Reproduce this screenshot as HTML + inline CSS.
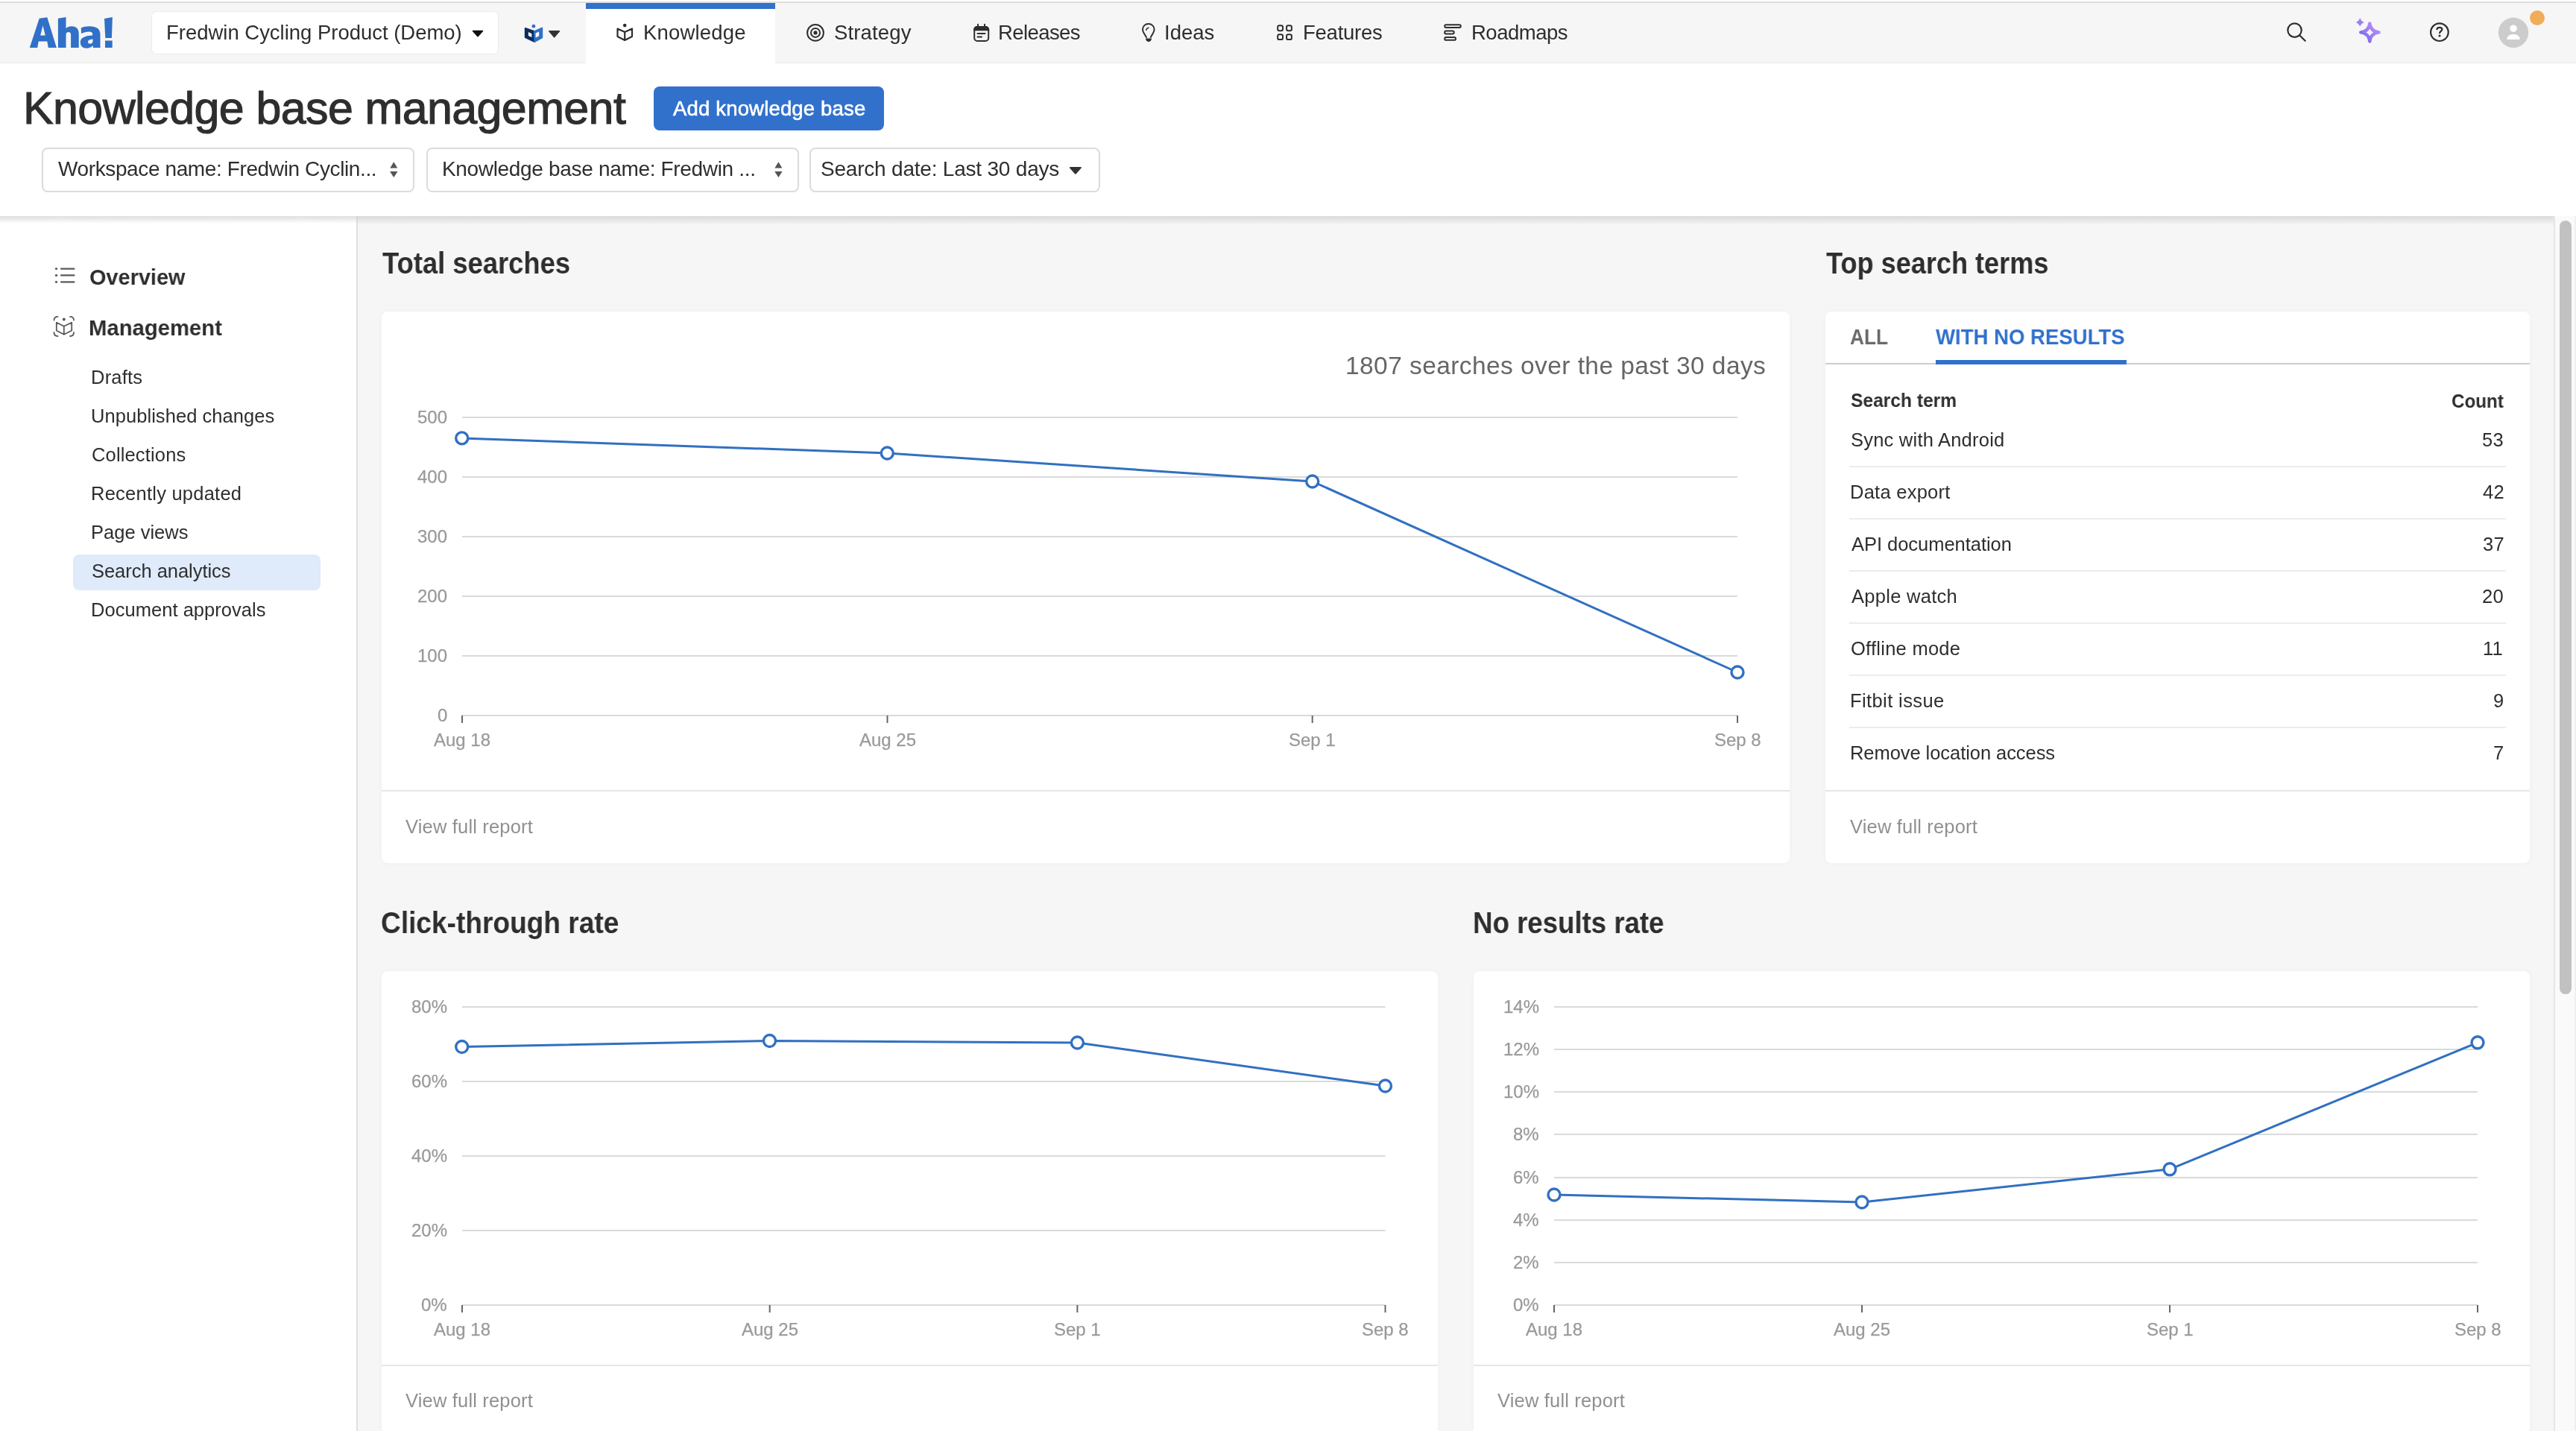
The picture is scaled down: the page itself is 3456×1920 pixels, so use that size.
<!DOCTYPE html>
<html><head><meta charset="utf-8"><title>Knowledge base management</title>
<style>
html,body{margin:0;padding:0;width:3456px;height:1920px;overflow:hidden;background:#f6f6f6;}
body{position:relative;font-family:"Liberation Sans", sans-serif;}
.t{position:absolute;white-space:nowrap;font-family:"Liberation Sans", sans-serif;will-change:transform;}
svg{position:absolute;left:0;top:0;}
</style></head><body>
<div style="position:absolute;left:0px;top:0px;width:3456px;height:1920px;background:#f6f6f6"></div>
<div style="position:absolute;left:0px;top:0px;width:3456px;height:2px;background:#ffffff"></div>
<div style="position:absolute;left:0px;top:2px;width:3456px;height:2px;background:#dedede"></div>
<div style="position:absolute;left:0px;top:4px;width:3456px;height:82px;background:#f6f6f6"></div>
<div style="position:absolute;left:0px;top:84px;width:3456px;height:2px;background:#ececec"></div>
<div style="position:absolute;left:0px;top:85px;width:3456px;height:205px;background:#ffffff"></div>
<div style="position:absolute;left:0px;top:290px;width:3456px;height:12px;background:linear-gradient(#dadada,rgba(246,246,246,0))"></div>
<div style="position:absolute;left:0px;top:290px;width:478px;height:1630px;background:#ffffff"></div>
<div style="position:absolute;left:0px;top:290px;width:478px;height:10px;background:linear-gradient(#dedede,rgba(255,255,255,0))"></div>
<div style="position:absolute;left:478px;top:290px;width:2px;height:1630px;background:linear-gradient(#d4d4d4,#e0e0e0 12px,#e0e0e0)"></div>
<div style="position:absolute;left:786px;top:4px;width:254px;height:82px;background:#ffffff"></div>
<div style="position:absolute;left:786px;top:4px;width:254px;height:8px;background:#3171cc"></div>
<div style="position:absolute;left:204px;top:16px;width:464px;height:56px;background:#ffffff;border-radius:6px;box-shadow:0 0 0 1px #ececec"></div>
<div style="position:absolute;left:877px;top:116px;width:309px;height:59px;background:#3171cc;border-radius:8px"></div>
<div style="position:absolute;left:56px;top:198px;width:500px;height:60px;background:#fff;border:2px solid #dcdcdc;border-radius:8px;box-sizing:border-box"></div>
<div style="position:absolute;left:572px;top:198px;width:500px;height:60px;background:#fff;border:2px solid #dcdcdc;border-radius:8px;box-sizing:border-box"></div>
<div style="position:absolute;left:1086px;top:198px;width:390px;height:60px;background:#fff;border:2px solid #dcdcdc;border-radius:8px;box-sizing:border-box"></div>
<div style="position:absolute;left:98px;top:744px;width:332px;height:48px;background:#dfeafa;border-radius:8px"></div>
<div style="position:absolute;left:512px;top:418px;width:1889px;height:740px;background:#fff;border-radius:8px;box-shadow:0 0 6px rgba(0,0,0,0.035)"></div>
<div style="position:absolute;left:2449px;top:418px;width:945px;height:740px;background:#fff;border-radius:8px;box-shadow:0 0 6px rgba(0,0,0,0.035)"></div>
<div style="position:absolute;left:512px;top:1303px;width:1417px;height:687px;background:#fff;border-radius:8px;box-shadow:0 0 6px rgba(0,0,0,0.035)"></div>
<div style="position:absolute;left:1977px;top:1303px;width:1417px;height:687px;background:#fff;border-radius:8px;box-shadow:0 0 6px rgba(0,0,0,0.035)"></div>
<div style="position:absolute;left:512px;top:1060px;width:1889px;height:2px;background:#e6e6e6"></div>
<div style="position:absolute;left:2449px;top:1060px;width:945px;height:2px;background:#e6e6e6"></div>
<div style="position:absolute;left:512px;top:1831px;width:1417px;height:2px;background:#e6e6e6"></div>
<div style="position:absolute;left:1977px;top:1831px;width:1417px;height:2px;background:#e6e6e6"></div>
<div style="position:absolute;left:2449px;top:487px;width:945px;height:2px;background:#cdcdcd"></div>
<div style="position:absolute;left:2597px;top:483px;width:256px;height:6px;background:#3171cc"></div>
<div style="position:absolute;left:2481px;top:625px;width:881px;height:2px;background:#ececec"></div>
<div style="position:absolute;left:2481px;top:695px;width:881px;height:2px;background:#ececec"></div>
<div style="position:absolute;left:2481px;top:765px;width:881px;height:2px;background:#ececec"></div>
<div style="position:absolute;left:2481px;top:835px;width:881px;height:2px;background:#ececec"></div>
<div style="position:absolute;left:2481px;top:905px;width:881px;height:2px;background:#ececec"></div>
<div style="position:absolute;left:2481px;top:975px;width:881px;height:2px;background:#ececec"></div>
<div style="position:absolute;left:3426px;top:290px;width:30px;height:1630px;background:#fafafa"></div>
<div style="position:absolute;left:3426px;top:290px;width:2px;height:1630px;background:#e6e6e6"></div>
<div style="position:absolute;left:3454px;top:290px;width:2px;height:1630px;background:#f0f0f0"></div>
<div style="position:absolute;left:3434px;top:296px;width:16px;height:1038px;background:#c1c1c1;border-radius:8px"></div>
<div class="t" style="left:223.44px;top:29.52px;font-size:27.5px;line-height:27.5px;letter-spacing:-0.020px;color:#2e2e2e;">Fredwin Cycling Product (Demo)</div>
<div class="t" style="left:862.74px;top:29.52px;font-size:27.5px;line-height:27.5px;letter-spacing:0.175px;color:#2e2e2e;">Knowledge</div>
<div class="t" style="left:1119.35px;top:29.62px;font-size:27.5px;line-height:27.5px;letter-spacing:0.156px;color:#2e2e2e;">Strategy</div>
<div class="t" style="left:1339.44px;top:29.62px;font-size:27.5px;line-height:27.5px;letter-spacing:-0.585px;color:#2e2e2e;">Releases</div>
<div class="t" style="left:1562.06px;top:29.62px;font-size:27.5px;line-height:27.5px;letter-spacing:0.015px;color:#2e2e2e;">Ideas</div>
<div class="t" style="left:1748.24px;top:29.62px;font-size:27.5px;line-height:27.5px;letter-spacing:-0.253px;color:#2e2e2e;">Features</div>
<div class="t" style="left:1973.74px;top:29.62px;font-size:27.5px;line-height:27.5px;letter-spacing:-0.491px;color:#2e2e2e;">Roadmaps</div>
<div class="t" style="left:31.00px;top:114.86px;font-size:61px;line-height:61px;letter-spacing:-0.634px;color:#2e2e2e;-webkit-text-stroke:1.1px #2e2e2e;">Knowledge base management</div>
<div class="t" style="left:902.95px;top:131.72px;font-size:27.5px;line-height:27.5px;letter-spacing:0.173px;color:#ffffff;-webkit-text-stroke:0.6px #ffffff;">Add knowledge base</div>
<div class="t" style="left:77.88px;top:213.10px;font-size:28px;line-height:28px;letter-spacing:-0.384px;color:#2e2e2e;">Workspace name: Fredwin Cyclin...</div>
<div class="t" style="left:593.30px;top:213.10px;font-size:28px;line-height:28px;letter-spacing:-0.328px;color:#2e2e2e;">Knowledge base name: Fredwin ...</div>
<div class="t" style="left:1101.03px;top:213.10px;font-size:28px;line-height:28px;letter-spacing:-0.210px;color:#2e2e2e;">Search date: Last 30 days</div>
<div class="t" style="left:119.52px;top:356.61px;font-size:30px;line-height:30px;letter-spacing:0.000px;color:#2e2e2e;font-weight:700;transform:scaleX(0.9626);transform-origin:0 0;">Overview</div>
<div class="t" style="left:119.04px;top:424.61px;font-size:30px;line-height:30px;letter-spacing:0.000px;color:#2e2e2e;font-weight:700;transform:scaleX(0.9752);transform-origin:0 0;">Management</div>
<div class="t" style="left:121.91px;top:494.11px;font-size:25.5px;line-height:25.5px;letter-spacing:0.221px;color:#2e2e2e;">Drafts</div>
<div class="t" style="left:122.03px;top:546.11px;font-size:25.5px;line-height:25.5px;letter-spacing:0.057px;color:#2e2e2e;">Unpublished changes</div>
<div class="t" style="left:122.71px;top:598.11px;font-size:25.5px;line-height:25.5px;letter-spacing:0.149px;color:#2e2e2e;">Collections</div>
<div class="t" style="left:121.91px;top:650.11px;font-size:25.5px;line-height:25.5px;letter-spacing:0.238px;color:#2e2e2e;">Recently updated</div>
<div class="t" style="left:121.91px;top:702.11px;font-size:25.5px;line-height:25.5px;letter-spacing:0.001px;color:#2e2e2e;">Page views</div>
<div class="t" style="left:122.84px;top:754.11px;font-size:25.5px;line-height:25.5px;letter-spacing:-0.034px;color:#2e2e2e;">Search analytics</div>
<div class="t" style="left:121.91px;top:806.11px;font-size:25.5px;line-height:25.5px;letter-spacing:0.038px;color:#2e2e2e;">Document approvals</div>
<div class="t" style="left:512.59px;top:332.74px;font-size:40px;line-height:40px;letter-spacing:0.000px;color:#2e2e2e;font-weight:700;transform:scaleX(0.9092);transform-origin:0 0;">Total searches</div>
<div class="t" style="left:2450.34px;top:332.74px;font-size:40px;line-height:40px;letter-spacing:0.000px;color:#2e2e2e;font-weight:700;transform:scaleX(0.9029);transform-origin:0 0;">Top search terms</div>
<div class="t" style="left:511.48px;top:1217.84px;font-size:40px;line-height:40px;letter-spacing:0.000px;color:#2e2e2e;font-weight:700;transform:scaleX(0.9269);transform-origin:0 0;">Click-through rate</div>
<div class="t" style="left:1975.55px;top:1217.84px;font-size:40px;line-height:40px;letter-spacing:0.000px;color:#2e2e2e;font-weight:700;transform:scaleX(0.9158);transform-origin:0 0;">No results rate</div>
<div class="t" style="left:1805.35px;top:474.44px;font-size:33.5px;line-height:33.5px;letter-spacing:0.426px;color:#666666;">1807 searches over the past 30 days</div>
<div class="t" style="left:544.19px;top:1097.21px;font-size:25.5px;line-height:25.5px;letter-spacing:0.177px;color:#909090;">View full report</div>
<div class="t" style="left:2481.89px;top:1097.21px;font-size:25.5px;line-height:25.5px;letter-spacing:0.177px;color:#909090;">View full report</div>
<div class="t" style="left:544.19px;top:1866.91px;font-size:25.5px;line-height:25.5px;letter-spacing:0.177px;color:#909090;">View full report</div>
<div class="t" style="left:2008.89px;top:1866.91px;font-size:25.5px;line-height:25.5px;letter-spacing:0.177px;color:#909090;">View full report</div>
<div class="t" style="left:2481.85px;top:436.61px;font-size:30px;line-height:30px;letter-spacing:0.000px;color:#6a6a6a;font-weight:700;transform:scaleX(0.8739);transform-origin:0 0;">ALL</div>
<div class="t" style="left:2597.47px;top:436.61px;font-size:30px;line-height:30px;letter-spacing:0.000px;color:#3171cc;font-weight:700;transform:scaleX(0.9184);transform-origin:0 0;">WITH NO RESULTS</div>
<div class="t" style="left:2483.29px;top:525.41px;font-size:25.5px;line-height:25.5px;letter-spacing:0.000px;color:#2e2e2e;font-weight:700;transform:scaleX(0.9635);transform-origin:0 0;">Search term</div>
<div class="t" style="left:3288.51px;top:525.91px;font-size:25.5px;line-height:25.5px;letter-spacing:0.000px;color:#2e2e2e;font-weight:700;transform:scaleX(0.9477);transform-origin:0 0;">Count</div>
<div class="t" style="left:2482.84px;top:577.61px;font-size:25.5px;line-height:25.5px;letter-spacing:0.219px;color:#2e2e2e;">Sync with Android</div>
<div class="t" style="left:3330.46px;top:577.61px;font-size:25.5px;line-height:25.5px;letter-spacing:0.300px;color:#2e2e2e;">53</div>
<div class="t" style="left:2481.91px;top:647.61px;font-size:25.5px;line-height:25.5px;letter-spacing:0.256px;color:#2e2e2e;">Data export</div>
<div class="t" style="left:3330.62px;top:647.61px;font-size:25.5px;line-height:25.5px;letter-spacing:0.300px;color:#2e2e2e;">42</div>
<div class="t" style="left:2483.95px;top:717.61px;font-size:25.5px;line-height:25.5px;letter-spacing:-0.035px;color:#2e2e2e;">API documentation</div>
<div class="t" style="left:3330.62px;top:717.61px;font-size:25.5px;line-height:25.5px;letter-spacing:0.300px;color:#2e2e2e;">37</div>
<div class="t" style="left:2483.95px;top:787.91px;font-size:25.5px;line-height:25.5px;letter-spacing:0.279px;color:#2e2e2e;">Apple watch</div>
<div class="t" style="left:3330.33px;top:787.91px;font-size:25.5px;line-height:25.5px;letter-spacing:0.300px;color:#2e2e2e;">20</div>
<div class="t" style="left:2482.79px;top:857.91px;font-size:25.5px;line-height:25.5px;letter-spacing:0.261px;color:#2e2e2e;">Offline mode</div>
<div class="t" style="left:3330.58px;top:857.91px;font-size:25.5px;line-height:25.5px;letter-spacing:0.300px;color:#2e2e2e;">11</div>
<div class="t" style="left:2481.91px;top:927.91px;font-size:25.5px;line-height:25.5px;letter-spacing:0.396px;color:#2e2e2e;">Fitbit issue</div>
<div class="t" style="left:3345.03px;top:927.91px;font-size:25.5px;line-height:25.5px;letter-spacing:0.300px;color:#2e2e2e;">9</div>
<div class="t" style="left:2481.91px;top:997.91px;font-size:25.5px;line-height:25.5px;letter-spacing:-0.060px;color:#2e2e2e;">Remove location access</div>
<div class="t" style="left:3345.10px;top:997.91px;font-size:25.5px;line-height:25.5px;letter-spacing:0.300px;color:#2e2e2e;">7</div>
<div class="t" style="left:559.89px;top:547.88px;font-size:24px;line-height:24px;letter-spacing:0.000px;color:#999999;-webkit-text-stroke:0.25px #999999;">500</div>
<div class="t" style="left:559.89px;top:627.88px;font-size:24px;line-height:24px;letter-spacing:0.000px;color:#999999;-webkit-text-stroke:0.25px #999999;">400</div>
<div class="t" style="left:559.89px;top:707.88px;font-size:24px;line-height:24px;letter-spacing:0.000px;color:#999999;-webkit-text-stroke:0.25px #999999;">300</div>
<div class="t" style="left:559.89px;top:787.88px;font-size:24px;line-height:24px;letter-spacing:0.000px;color:#999999;-webkit-text-stroke:0.25px #999999;">200</div>
<div class="t" style="left:559.89px;top:867.88px;font-size:24px;line-height:24px;letter-spacing:0.000px;color:#999999;-webkit-text-stroke:0.25px #999999;">100</div>
<div class="t" style="left:586.59px;top:947.88px;font-size:24px;line-height:24px;letter-spacing:0.000px;color:#999999;-webkit-text-stroke:0.25px #999999;">0</div>
<div class="t" style="left:582.46px;top:981.48px;font-size:24px;line-height:24px;letter-spacing:0.000px;color:#999999;-webkit-text-stroke:0.25px #999999;">Aug 18</div>
<div class="t" style="left:1152.95px;top:981.48px;font-size:24px;line-height:24px;letter-spacing:0.000px;color:#999999;-webkit-text-stroke:0.25px #999999;">Aug 25</div>
<div class="t" style="left:1729.38px;top:981.48px;font-size:24px;line-height:24px;letter-spacing:0.000px;color:#999999;-webkit-text-stroke:0.25px #999999;">Sep 1</div>
<div class="t" style="left:2299.62px;top:981.48px;font-size:24px;line-height:24px;letter-spacing:0.000px;color:#999999;-webkit-text-stroke:0.25px #999999;">Sep 8</div>
<div class="t" style="left:551.82px;top:1338.88px;font-size:24px;line-height:24px;letter-spacing:0.000px;color:#999999;-webkit-text-stroke:0.25px #999999;">80%</div>
<div class="t" style="left:551.82px;top:1438.88px;font-size:24px;line-height:24px;letter-spacing:0.000px;color:#999999;-webkit-text-stroke:0.25px #999999;">60%</div>
<div class="t" style="left:551.82px;top:1538.88px;font-size:24px;line-height:24px;letter-spacing:0.000px;color:#999999;-webkit-text-stroke:0.25px #999999;">40%</div>
<div class="t" style="left:551.82px;top:1638.88px;font-size:24px;line-height:24px;letter-spacing:0.000px;color:#999999;-webkit-text-stroke:0.25px #999999;">20%</div>
<div class="t" style="left:565.17px;top:1738.88px;font-size:24px;line-height:24px;letter-spacing:0.000px;color:#999999;-webkit-text-stroke:0.25px #999999;">0%</div>
<div class="t" style="left:582.46px;top:1772.38px;font-size:24px;line-height:24px;letter-spacing:0.000px;color:#999999;-webkit-text-stroke:0.25px #999999;">Aug 18</div>
<div class="t" style="left:995.15px;top:1772.38px;font-size:24px;line-height:24px;letter-spacing:0.000px;color:#999999;-webkit-text-stroke:0.25px #999999;">Aug 25</div>
<div class="t" style="left:1414.08px;top:1772.38px;font-size:24px;line-height:24px;letter-spacing:0.000px;color:#999999;-webkit-text-stroke:0.25px #999999;">Sep 1</div>
<div class="t" style="left:1827.12px;top:1772.38px;font-size:24px;line-height:24px;letter-spacing:0.000px;color:#999999;-webkit-text-stroke:0.25px #999999;">Sep 8</div>
<div class="t" style="left:2016.82px;top:1338.88px;font-size:24px;line-height:24px;letter-spacing:0.000px;color:#999999;-webkit-text-stroke:0.25px #999999;">14%</div>
<div class="t" style="left:2016.82px;top:1395.88px;font-size:24px;line-height:24px;letter-spacing:0.000px;color:#999999;-webkit-text-stroke:0.25px #999999;">12%</div>
<div class="t" style="left:2016.82px;top:1452.88px;font-size:24px;line-height:24px;letter-spacing:0.000px;color:#999999;-webkit-text-stroke:0.25px #999999;">10%</div>
<div class="t" style="left:2030.17px;top:1509.88px;font-size:24px;line-height:24px;letter-spacing:0.000px;color:#999999;-webkit-text-stroke:0.25px #999999;">8%</div>
<div class="t" style="left:2030.17px;top:1567.88px;font-size:24px;line-height:24px;letter-spacing:0.000px;color:#999999;-webkit-text-stroke:0.25px #999999;">6%</div>
<div class="t" style="left:2030.17px;top:1624.88px;font-size:24px;line-height:24px;letter-spacing:0.000px;color:#999999;-webkit-text-stroke:0.25px #999999;">4%</div>
<div class="t" style="left:2030.17px;top:1681.88px;font-size:24px;line-height:24px;letter-spacing:0.000px;color:#999999;-webkit-text-stroke:0.25px #999999;">2%</div>
<div class="t" style="left:2030.17px;top:1738.88px;font-size:24px;line-height:24px;letter-spacing:0.000px;color:#999999;-webkit-text-stroke:0.25px #999999;">0%</div>
<div class="t" style="left:2047.46px;top:1772.38px;font-size:24px;line-height:24px;letter-spacing:0.000px;color:#999999;-webkit-text-stroke:0.25px #999999;">Aug 18</div>
<div class="t" style="left:2460.45px;top:1772.38px;font-size:24px;line-height:24px;letter-spacing:0.000px;color:#999999;-webkit-text-stroke:0.25px #999999;">Aug 25</div>
<div class="t" style="left:2879.68px;top:1772.38px;font-size:24px;line-height:24px;letter-spacing:0.000px;color:#999999;-webkit-text-stroke:0.25px #999999;">Sep 1</div>
<div class="t" style="left:3292.62px;top:1772.38px;font-size:24px;line-height:24px;letter-spacing:0.000px;color:#999999;-webkit-text-stroke:0.25px #999999;">Sep 8</div>
<svg width="3456" height="1920" viewBox="0 0 3456 1920" xmlns="http://www.w3.org/2000/svg">
<line x1="620" y1="560" x2="2331" y2="560" stroke="#dadada" stroke-width="2"/>
<line x1="620" y1="640" x2="2331" y2="640" stroke="#dadada" stroke-width="2"/>
<line x1="620" y1="720" x2="2331" y2="720" stroke="#dadada" stroke-width="2"/>
<line x1="620" y1="800" x2="2331" y2="800" stroke="#dadada" stroke-width="2"/>
<line x1="620" y1="880" x2="2331" y2="880" stroke="#dadada" stroke-width="2"/>
<line x1="620" y1="960" x2="2331" y2="960" stroke="#dadada" stroke-width="2"/>
<line x1="620" y1="960" x2="620" y2="970" stroke="#666" stroke-width="2"/>
<line x1="1190.5" y1="960" x2="1190.5" y2="970" stroke="#666" stroke-width="2"/>
<line x1="1760.7" y1="960" x2="1760.7" y2="970" stroke="#666" stroke-width="2"/>
<line x1="2331" y1="960" x2="2331" y2="970" stroke="#666" stroke-width="2"/>
<path d="M619.7,587.9 L1190.3,608 L1760.7,646 L2331,902" fill="none" stroke="#3170c1" stroke-width="3" stroke-linejoin="round"/>
<circle cx="619.7" cy="587.9" r="8" fill="#fff" stroke="#3170c1" stroke-width="3.4"/>
<circle cx="1190.3" cy="608" r="8" fill="#fff" stroke="#3170c1" stroke-width="3.4"/>
<circle cx="1760.7" cy="646" r="8" fill="#fff" stroke="#3170c1" stroke-width="3.4"/>
<circle cx="2331" cy="902" r="8" fill="#fff" stroke="#3170c1" stroke-width="3.4"/>
<line x1="620" y1="1351" x2="1858.5" y2="1351" stroke="#dadada" stroke-width="2"/>
<line x1="620" y1="1451" x2="1858.5" y2="1451" stroke="#dadada" stroke-width="2"/>
<line x1="620" y1="1551" x2="1858.5" y2="1551" stroke="#dadada" stroke-width="2"/>
<line x1="620" y1="1651" x2="1858.5" y2="1651" stroke="#dadada" stroke-width="2"/>
<line x1="620" y1="1751" x2="1858.5" y2="1751" stroke="#dadada" stroke-width="2"/>
<line x1="620" y1="1751" x2="620" y2="1761" stroke="#666" stroke-width="2"/>
<line x1="1032.7" y1="1751" x2="1032.7" y2="1761" stroke="#666" stroke-width="2"/>
<line x1="1445.4" y1="1751" x2="1445.4" y2="1761" stroke="#666" stroke-width="2"/>
<line x1="1858.5" y1="1751" x2="1858.5" y2="1761" stroke="#666" stroke-width="2"/>
<path d="M619.7,1404.5 L1032.5,1396.5 L1445.4,1399 L1858.5,1457" fill="none" stroke="#3170c1" stroke-width="3" stroke-linejoin="round"/>
<circle cx="619.7" cy="1404.5" r="8" fill="#fff" stroke="#3170c1" stroke-width="3.4"/>
<circle cx="1032.5" cy="1396.5" r="8" fill="#fff" stroke="#3170c1" stroke-width="3.4"/>
<circle cx="1445.4" cy="1399" r="8" fill="#fff" stroke="#3170c1" stroke-width="3.4"/>
<circle cx="1858.5" cy="1457" r="8" fill="#fff" stroke="#3170c1" stroke-width="3.4"/>
<line x1="2085" y1="1351" x2="3324" y2="1351" stroke="#dadada" stroke-width="2"/>
<line x1="2085" y1="1408" x2="3324" y2="1408" stroke="#dadada" stroke-width="2"/>
<line x1="2085" y1="1465" x2="3324" y2="1465" stroke="#dadada" stroke-width="2"/>
<line x1="2085" y1="1522" x2="3324" y2="1522" stroke="#dadada" stroke-width="2"/>
<line x1="2085" y1="1580" x2="3324" y2="1580" stroke="#dadada" stroke-width="2"/>
<line x1="2085" y1="1637" x2="3324" y2="1637" stroke="#dadada" stroke-width="2"/>
<line x1="2085" y1="1694" x2="3324" y2="1694" stroke="#dadada" stroke-width="2"/>
<line x1="2085" y1="1751" x2="3324" y2="1751" stroke="#dadada" stroke-width="2"/>
<line x1="2085" y1="1751" x2="2085" y2="1761" stroke="#666" stroke-width="2"/>
<line x1="2498" y1="1751" x2="2498" y2="1761" stroke="#666" stroke-width="2"/>
<line x1="2911" y1="1751" x2="2911" y2="1761" stroke="#666" stroke-width="2"/>
<line x1="3324" y1="1751" x2="3324" y2="1761" stroke="#666" stroke-width="2"/>
<path d="M2085,1603 L2498,1613 L2911,1568.8 L3324,1398.8" fill="none" stroke="#3170c1" stroke-width="3" stroke-linejoin="round"/>
<circle cx="2085" cy="1603" r="8" fill="#fff" stroke="#3170c1" stroke-width="3.4"/>
<circle cx="2498" cy="1613" r="8" fill="#fff" stroke="#3170c1" stroke-width="3.4"/>
<circle cx="2911" cy="1568.8" r="8" fill="#fff" stroke="#3170c1" stroke-width="3.4"/>
<circle cx="3324" cy="1398.8" r="8" fill="#fff" stroke="#3170c1" stroke-width="3.4"/>
<g fill="#3070c8">
<path d="M39.8,64 L52.7,24.8 L63.3,23.3 L75.9,64 L64.8,64 L63.3,55.4 L51.7,55.4 L50.2,64 Z M54.2,47.6 L60.8,47.6 L57.5,34.2 Z" fill-rule="evenodd"/>
<path d="M77.9,24.8 L88.5,23 L88.5,38 C90.5,36 93,35.2 96,35.2 C102,35.2 105.7,38.5 105.7,45 L105.7,64 L95.1,64 L95.1,47 C95.1,44.5 94,43 91.8,43 C89.8,43 88.5,44.5 88.5,47 L88.5,64 L77.9,64 Z"/>
<path d="M108.8,37.5 C111.5,36 115.5,35.2 120,35.2 C129,35.2 134.5,38.5 134.5,46 L134.5,64 L125,64 L124.6,61 C122.5,63.5 119.5,64.7 116,64.7 C111,64.7 107.8,61.5 107.8,57 C107.8,51 113,48 124,47.5 L124.2,46 C124.2,43.5 122.5,42.5 119.5,42.5 C116,42.5 112.5,43.5 109,45 Z M124.5,52.5 C120,52.8 118,54.2 118,56.3 C118,57.8 119,58.8 120.8,58.8 C122.8,58.8 124.5,57.5 124.5,55.5 Z" fill-rule="evenodd"/>
<path d="M140,24.9 L150.9,23 L149.9,51 L141.3,51 Z M141,54.4 L150.7,54.4 L150.7,64 L141,64 Z"/>
</g>
<path d="M634.5,41.5 L647.5,41.5 L641,48.6 Z" fill="#111" stroke="#111" stroke-width="1.6" stroke-linejoin="round"/>
<g>
<path d="M704.8,38 L716.9,42.2 L717.4,56 L704.8,50 Z" fill="#0d2d5e" stroke="#0d2d5e" stroke-width="2" stroke-linejoin="round"/>
<path d="M716.9,42.2 L727.2,37.6 L727.2,50.3 L717.4,56 Z" fill="#3070c8" stroke="#3070c8" stroke-width="2" stroke-linejoin="round"/>
<path d="M708.9,43.1 L713.4,45.2 L713.4,50 L708.9,48 Z" fill="#ffffff"/>
<path d="M718.6,44.5 L723.2,42.4 L723.2,48.3 L718.6,50.4 Z" fill="#ffffff"/>
<circle cx="715.9" cy="35.2" r="2.4" fill="#3070c8"/>
<path d="M736.8,41.8 L750.4,41.8 L743.6,49.6 Z" fill="#333" stroke="#333" stroke-width="1.6" stroke-linejoin="round"/>
</g>
<g fill="none" stroke="#2e2e2e" stroke-width="2.2" stroke-linejoin="round">
<path d="M828.5,38.5 L838.2,42.9 L848,38.5 L848,49 L838.2,53.9 L828.5,49 Z M838.2,42.9 L838.2,53.9"/>
</g><circle cx="838.2" cy="34.1" r="2.3" fill="#2e2e2e"/>
<g fill="none" stroke="#2e2e2e" stroke-width="2"><circle cx="1094" cy="43.9" r="10.9"/><circle cx="1094" cy="43.9" r="6"/></g><circle cx="1094" cy="43.9" r="2.6" fill="#2e2e2e"/>
<g fill="none" stroke="#2e2e2e" stroke-width="2" stroke-linecap="round">
<rect x="1307.2" y="36" width="19" height="19" rx="4"/>
<line x1="1312" y1="32.8" x2="1312" y2="36"/><line x1="1321" y1="32.8" x2="1321" y2="36"/>
<line x1="1311.5" y1="45" x2="1321.5" y2="45"/><line x1="1311.5" y1="49.5" x2="1317" y2="49.5"/>
</g><path d="M1306.2,40 C1306.2,37 1308,35 1311,35 L1322,35 C1325,35 1327.2,37 1327.2,40 L1327.2,41.2 L1306.2,41.2 Z" fill="#2e2e2e"/>
<g fill="none" stroke="#2e2e2e" stroke-width="2" stroke-linecap="round">
<path d="M1538,50 L1535,45 C1533.8,43 1533,41.8 1533,39.5 C1533,35.2 1536.5,32 1540.8,32 C1545.1,32 1548.6,35.2 1548.6,39.5 C1548.6,41.8 1547.8,43 1546.6,45 L1543.8,50"/>
<path d="M1537.8,40.5 C1538,38.8 1539.2,37.5 1541,37.2" stroke-width="1.5"/>
</g><path d="M1537,51.5 L1545,51.5 C1545,54 1543.2,56 1541,56 C1538.8,56 1537,54 1537,51.5 Z" fill="#2e2e2e"/>
<g fill="none" stroke="#2e2e2e" stroke-width="2">
<rect x="1714.2" y="34.3" width="6.8" height="6.9" rx="2.2"/><rect x="1726.1" y="34.3" width="6.8" height="6.9" rx="2.2"/>
<rect x="1714.2" y="46.2" width="6.8" height="6.9" rx="2.2"/><rect x="1726.1" y="46.2" width="6.8" height="6.9" rx="2.2"/>
</g>
<g fill="none" stroke="#2e2e2e" stroke-width="2">
<rect x="1938.2" y="33.2" width="21.6" height="3.8" rx="1.9"/>
<rect x="1938.2" y="41.6" width="12.5" height="3.8" rx="1.9"/>
<rect x="1938.2" y="50" width="14.8" height="3.8" rx="1.9"/>
</g>
<g fill="none" stroke="#2e2e2e" stroke-width="2.2" stroke-linecap="round"><circle cx="3078.5" cy="40.6" r="9.2"/><line x1="3085.6" y1="47.7" x2="3092.6" y2="54.8"/></g>
<defs><linearGradient id="sg" x1="1" y1="0" x2="0" y2="1"><stop offset="0" stop-color="#bb92f8"/><stop offset="0.55" stop-color="#9c7cf5"/><stop offset="1" stop-color="#6d5df1"/></linearGradient></defs>
<path d="M3166.2,24 Q3167.6,28.5 3171.9,29.9 Q3167.6,31.3 3166.2,35.7 Q3164.8,31.3 3160.6,29.9 Q3164.8,28.5 3166.2,24 Z" fill="#a07ef5"/>
<path d="M3179.3,31.4 Q3180.6,42 3191.5,43.4 Q3180.6,44.8 3179.3,55.5 Q3178,44.8 3167.2,43.4 Q3178,42 3179.3,31.4 Z" fill="none" stroke="url(#sg)" stroke-width="4.4" stroke-linejoin="round"/>
<g fill="none" stroke="#2e2e2e" stroke-width="2.2" stroke-linecap="round"><circle cx="3272.9" cy="43.2" r="11.8"/>
<path d="M3269.4,39.2 C3269.8,37.6 3271,36.8 3272.9,36.8 C3275,36.8 3276.4,38 3276.4,39.6 C3276.4,41.5 3273.2,42.3 3273.1,44.2"/></g>
<circle cx="3273" cy="48" r="1.6" fill="#2e2e2e"/>
<circle cx="3372" cy="43.8" r="20.2" fill="#cccccc"/>
<circle cx="3372" cy="38.2" r="4.8" fill="#fff"/>
<path d="M3363.3,53 C3363.3,48.5 3367,46 3372,46 C3377,46 3380.7,48.5 3380.7,53 Z" fill="#fff"/>
<circle cx="3404" cy="24" r="10" fill="#efad58"/>
<path d="M523.3,225.6 L528.3,217.3 L533.3,225.6 Z M523.0999999999999,230 L528.3,238 L533.5,230 Z" fill="#555"/>
<path d="M1039.4,225.6 L1044.4,217.3 L1049.4,225.6 Z M1039.2,230 L1044.4,238 L1049.6000000000001,230 Z" fill="#555"/>
<path d="M1435.8,224.8 L1450,224.8 L1442.9,232.8 Z" fill="#333" stroke="#333" stroke-width="1.8" stroke-linejoin="round"/>
<g fill="#5a5a5a"><circle cx="75.5" cy="360.6" r="1.6"/><circle cx="75.5" cy="369.4" r="1.6"/><circle cx="75.5" cy="378.3" r="1.6"/></g>
<g stroke="#5a5a5a" stroke-width="2.2" stroke-linecap="round"><line x1="82" y1="360.6" x2="99.5" y2="360.6"/><line x1="82" y1="369.4" x2="99.5" y2="369.4"/><line x1="82" y1="378.3" x2="99.5" y2="378.3"/></g>
<g fill="none" stroke="#5a5a5a" stroke-width="1.8" stroke-linecap="round" stroke-linejoin="round">
<path d="M72.5,429.5 C72.5,426.5 74.5,424.8 77.5,424.8"/><path d="M94,424.8 C97,424.8 99,426.5 99,429.5"/>
<path d="M72.5,446 C72.5,449 74.5,451 77.5,451"/><path d="M94,451 C97,451 99,449 99,446"/>
<path d="M75.8,432.7 L85.8,437.7 L96.2,432.7 L96.2,443.5 L85.8,448.8 L75.8,443.5 Z M85.8,437.7 L85.8,448.8"/>
</g><circle cx="85.8" cy="428.5" r="2" fill="#5a5a5a"/>
</svg>
</body></html>
